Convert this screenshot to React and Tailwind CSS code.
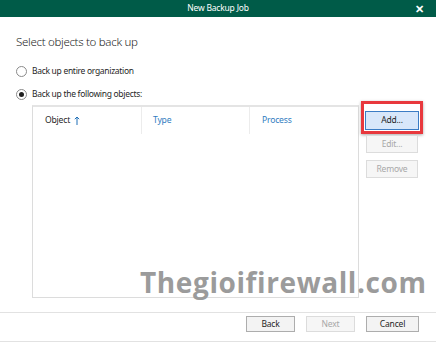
import React from 'react';

const font = { fontFamily: '"Noto Sans", "Open Sans", "Liberation Sans", sans-serif' };

function Radio({ checked, label }) {
  return (
    <label className="flex items-center gap-[5px] h-[16px]">
      <span className="w-[11px] h-[11px] rounded-full border border-[#8a8a8a] bg-white flex items-center justify-center">
        {checked && <span className="w-[5px] h-[5px] rounded-full bg-[#1f1f1f]" />}
      </span>
      <span className="text-[8.5px] tracking-[-0.3px] text-[#1f1f1f]">{label}</span>
    </label>
  );
}

function SideButton({ children, className = '' }) {
  return (
    <button
      className={`w-[52px] h-[18px] border border-[#dcdcdc] bg-[#f6f6f6] text-[8.5px] tracking-[-0.2px] text-[#a8a8a8] leading-none ${className}`}
    >
      {children}
    </button>
  );
}

export default function App() {
  return (
    <div className="relative w-[436px] h-[342px] bg-white flex flex-col overflow-hidden" style={font}>
      {/* title bar */}
      <div className="h-[17px] bg-[#005b48] flex items-center justify-center relative">
        <span className="text-[8.5px] tracking-[-0.2px] text-white">New Backup Job</span>
        <span className="absolute right-[12px] top-[2px] text-white text-[11px] font-bold leading-[13px]">✕</span>
      </div>

      {/* body */}
      <div className="flex-1 flex flex-col pl-4">
        <h1 className="mt-[17px] text-[11.5px] tracking-[-0.3px] font-light text-[#262626] leading-[16px]">
          Select objects to back up
        </h1>

        <div className="mt-[13px] flex flex-col gap-[7px]">
          <Radio label="Back up entire organization" />
          <Radio checked label="Back up the following objects:" />
        </div>

        <div className="mt-[3px] flex gap-[7px]">
          <div className="ml-[16px] w-[327px] h-[193px] border border-[#dcdcdc] border-t-2 border-t-[#e4e4e4]">
            <div className="grid grid-cols-[109px_108px_1fr] h-[27px] text-[8.6px] tracking-[-0.2px]">
              <div className="flex items-center pl-[12px] gap-[4px] text-[#1f1f1f] border-r border-[#ececec]">
                Object
                <svg width="6" height="9" viewBox="0 0 6 9" className="text-[#1f6fb7]">
                  <path d="M3 1v8M0.8 3.2L3 1l2.2 2.2" stroke="currentColor" strokeWidth="1" fill="none" />
                </svg>
              </div>
              <div className="flex items-center pl-[11px] text-[#2f7cc0] border-r border-[#ececec]">Type</div>
              <div className="flex items-center pl-[12px] text-[#2f7cc0]">Process</div>
            </div>
          </div>

          <div className="flex flex-col items-start">
            <div className="border-[3px] border-[#e8383d] p-[1px] shadow-[0_1px_3px_rgba(0,0,0,0.35)] -mt-[4px] -ml-[5px]">
              <button className="w-[54px] h-[19px] border border-[#3b7cc4] bg-[#d8e7fa] text-[8.5px] tracking-[-0.2px] text-[#1f1f1f] leading-none">
                Add...
              </button>
            </div>
            <SideButton className="mt-[1px]">Edit...</SideButton>
            <SideButton className="mt-[7px] h-[17px]">Remove</SideButton>
          </div>
        </div>
      </div>

      {/* footer */}
      <div className="h-[30px] border-t border-b border-[#e2e2e2] flex items-start pt-[3px] justify-end gap-[11px] pr-[17px]">
        <button className="w-[49px] h-[16px] border border-[#adadad] bg-[#f3f3f3] text-[8.5px] tracking-[-0.2px] text-[#1f1f1f] leading-none">Back</button>
        <button className="w-[49px] h-[16px] border border-[#dcdcdc] bg-[#f6f6f6] text-[8.5px] tracking-[-0.2px] text-[#a8a8a8] leading-none">Next</button>
        <button className="w-[53px] h-[16px] border border-[#adadad] bg-[#f3f3f3] text-[8.5px] tracking-[-0.2px] text-[#1f1f1f] leading-none">Cancel</button>
      </div>

      {/* watermark */}
      <div
        className="absolute left-[140px] top-[262px] text-[28px] font-bold text-[#9b9b9b] leading-[40px] tracking-[0.6px] pointer-events-none"
        style={{ fontFamily: '"Open Sans", "Noto Sans", sans-serif' }}
      >
        Thegioifirewall.com
      </div>
    </div>
  );
}
